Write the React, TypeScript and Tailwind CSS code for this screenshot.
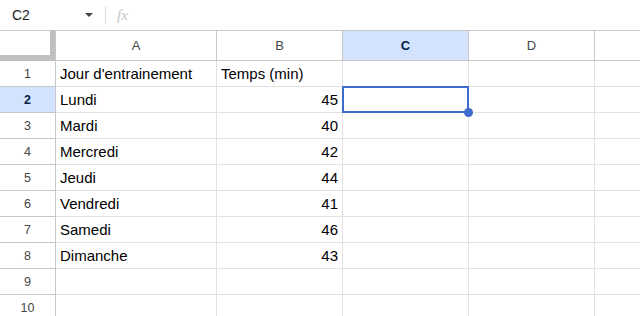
import React from "react";

const rows: [string, string][] = [
  ["Jour d'entrainement", "Temps (min)"],
  ["Lundi", "45"],
  ["Mardi", "40"],
  ["Mercredi", "42"],
  ["Jeudi", "44"],
  ["Vendredi", "41"],
  ["Samedi", "46"],
  ["Dimanche", "43"],
  ["", ""],
  ["", ""],
];

const FormulaBar = () => (
  <div className="h-[31px] flex items-center border-b border-[#c7c7c7] bg-white">
    <div className="w-[80px] pl-[12px] text-[14px] text-[#1f1f1f]">C2</div>
    <svg width="10" height="6" viewBox="0 0 10 6" className="ml-[4px]">
      <path d="M1 1 L9 1 L5 5 Z" fill="#444746" />
    </svg>
    <div className="ml-[11px] h-[18px] w-px bg-[#dadce0]" />
    <div
      className="ml-[11px] text-[15px] italic text-[#c4c7c5]"
      style={{ fontFamily: '"Liberation Serif", serif' }}
    >
      fx
    </div>
  </div>
);

const ColHeader = ({ label, w, active }: { label: string; w: string; active?: boolean }) => (
  <div
    className={`${w} shrink-0 h-full flex items-center justify-center border-r border-[#c7c7c7] text-[13px] ${
      active ? "bg-[#d3e3fd] text-[#041e49] font-bold" : "text-[#444746]"
    }`}
  >
    {label}
  </div>
);

export default function App() {
  return (
    <div
      className="w-[640px] h-[316px] overflow-hidden bg-white"
      style={{ fontFamily: '"Liberation Sans", Arial, sans-serif' }}
    >
      <FormulaBar />
      <div className="h-[30px] flex border-b border-[#c7c7c7]">
        <div className="w-[56px] shrink-0 h-full relative border-r border-[#c7c7c7]">
          <div className="absolute right-0 top-0 bottom-[-1px] w-[5px] bg-[#c0c0c0]" />
          <div className="absolute left-0 right-0 bottom-[-1px] h-[6px] bg-[#c0c0c0]" />
        </div>
        <ColHeader label="A" w="w-[161px]" />
        <ColHeader label="B" w="w-[126px]" />
        <ColHeader label="C" w="w-[126px]" active />
        <ColHeader label="D" w="w-[126px]" />
        <div className="flex-1" />
      </div>
      {rows.map(([a, b], i) => {
        const sel = i === 1;
        return (
          <div key={i} className="h-[26px] flex">
            <div
              className={`w-[56px] shrink-0 flex items-center justify-center pt-px border-r border-b border-[#c7c7c7] text-[12.5px] ${
                sel ? "bg-[#d3e3fd] text-[#041e49] font-bold" : "text-[#444746]"
              }`}
            >
              {i + 1}
            </div>
            <div className="w-[161px] shrink-0 flex items-center pl-[4px] pt-[2px] border-r border-b border-[#e1e1e1] text-[15px] text-black">
              {a}
            </div>
            <div
              className={`w-[126px] shrink-0 flex items-center pt-[2px] border-r border-b border-[#e1e1e1] text-[15px] text-black ${
                i === 0 ? "justify-start pl-[4px]" : "justify-end pr-[4px]"
              }`}
            >
              {b}
            </div>
            <div className="w-[126px] shrink-0 relative border-r border-b border-[#e1e1e1]">
              {sel && (
                <>
                  <div className="absolute -left-px -top-px -right-px -bottom-px border-2 border-[#3e6bcb]" />
                  <div className="absolute z-10 -right-[5px] -bottom-[5px] w-[9px] h-[9px] rounded-full bg-[#3e6bcb]" />
                </>
              )}
            </div>
            <div className="w-[126px] shrink-0 border-r border-b border-[#e1e1e1]" />
            <div className="flex-1 border-b border-[#e1e1e1]" />
          </div>
        );
      })}
    </div>
  );
}
